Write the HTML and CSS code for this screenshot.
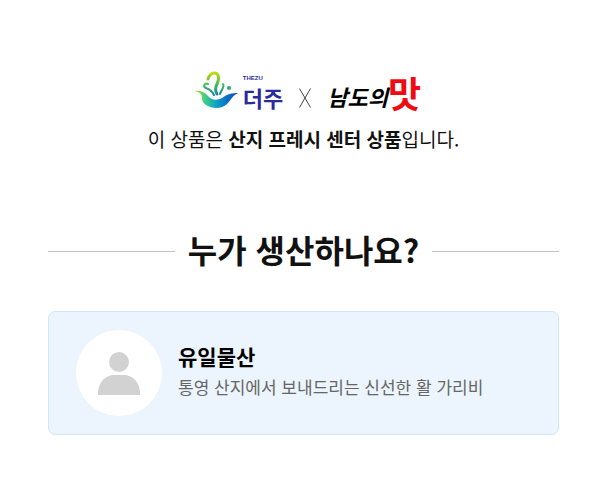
FILE: index.html
```html
<!DOCTYPE html>
<html lang="ko">
<head>
    <meta charset="UTF-8">
    <meta name="viewport" content="width=device-width, initial-scale=1.0">
    <title>산지 프레시 센터</title>
    <link rel="stylesheet" href="styles.css">
</head>
<body>
    <main class="container">
        <!-- Partner logos -->
        <header class="brands">
            <div class="thezu">
                <svg class="thezu-mark" viewBox="0 0 44 40" aria-hidden="true">
                    <defs>
                        <linearGradient id="wave" x1="0" y1="0" x2="1" y2="0">
                            <stop offset="0" stop-color="#b4e020"/>
                            <stop offset="0.25" stop-color="#38cc8a"/>
                            <stop offset="0.5" stop-color="#10a0c8"/>
                            <stop offset="0.75" stop-color="#0870c0"/>
                            <stop offset="1" stop-color="#2347b5"/>
                        </linearGradient>
                        <linearGradient id="swirl" gradientUnits="userSpaceOnUse" x1="0" y1="1" x2="0" y2="27">
                            <stop offset="0" stop-color="#c8dc10"/>
                            <stop offset="0.5" stop-color="#3db956"/>
                            <stop offset="1" stop-color="#0b75c0"/>
                        </linearGradient>
                    </defs>
                    <path d="M0 20C5 19 9 21 12 24C16 29 21 30 27 27C32 23 37 22 43 22C38 24 36 29 32 33C27 38 17 38 11 34C7 31 7 29 7 26C7 23 4 21 0 20Z" fill="url(#wave)"/>
                    <g fill="none" stroke="url(#swirl)" stroke-linecap="round" stroke-linejoin="round">
                        <path d="M13 8C14 4 17 2 19 2C25 2 24 9 22 13C20 17 20 20 22 23" stroke-width="3"/>
                        <path d="M13 13C9 11 8 16 11 17C14 18 17 20 19 24" stroke-width="2"/>
                        <path d="M28 13C30 16 26 19 25 23" stroke-width="2"/>
                    </g>
                    <circle cx="34" cy="17" r="2" fill="#29a978"/>
                </svg>
                <div class="thezu-name">
                    <span class="thezu-en">THEZU</span>
                    <span class="thezu-ko">더주</span>
                </div>
            </div>
            <svg class="cross" viewBox="0 0 12 20" aria-hidden="true">
                <path d="M0.5 0.5L11.5 19.5M11.5 0.5L0.5 19.5" stroke="#444" stroke-width="1"/>
            </svg>
            <div class="namdo">
                <span class="namdo-text">남도의</span><span class="namdo-taste">맛</span>
            </div>
        </header>
        <p class="notice">이 상품은 <b>산지 프레시 센터 상품</b>입니다.</p>

        <h1 class="heading">누가 생산하나요?</h1>

        <!-- Producer -->
        <section class="card">
            <div class="avatar">
                <svg class="avatar-icon" viewBox="0 0 42 43" aria-hidden="true">
                    <circle cx="21" cy="10" r="10"/>
                    <path d="M0 43V41C0 31 7 23 16 23H26C35 23 42 31 42 41V43Z"/>
                </svg>
            </div>
            <div class="producer">
                <h2 class="producer-name">유일물산</h2>
                <p class="producer-desc">통영 산지에서 보내드리는 신선한 활 가리비</p>
            </div>
        </section>
    </main>
</body>
</html>
```

FILE: styles.css
```css
body {
    margin: 0;
    background-color: #fff;
    color: #111;
    font-family: "Noto Sans CJK KR", sans-serif;
}
.container {
    padding: 68px 51px 48px 48px;
}

/* Logos */
.brands {
    display: flex;
    justify-content: center;
    align-items: center;
    gap: 16px;
    height: 48px;
    padding-left: 9px;
}
.thezu {
    display: flex;
    align-items: center;
    gap: 4px;
}
.thezu-mark {
    width: 44px;
    height: 40px;
    padding-bottom: 2px;
}
.thezu-name {
    display: flex;
    flex-direction: column;
    color: #2b2c9b;
    font-weight: bold;
    padding-top: 4px;
}
.thezu-en {
    font-family: "Liberation Sans", sans-serif;
    font-size: 6px;
    line-height: 6px;
}
.thezu-ko {
    font-size: 22px;
    line-height: 32px;
}
.cross {
    width: 12px;
    height: 20px;
    padding-top: 12px;
}
.namdo {
    display: flex;
    align-items: center;
}
.namdo-text {
    color: #000;
    font-size: 22px;
    line-height: 28px;
    font-weight: bold;
    font-style: italic;
    padding-top: 8px;
}
.namdo-taste {
    color: #f00b12;
    font-size: 36px;
    line-height: 48px;
    font-weight: bold;
}

.notice {
    margin: 7px 0 0;
    font-size: 19px;
    line-height: 32px;
    text-align: center;
}

/* Title with a line on both sides */
.heading {
    display: flex;
    align-items: center;
    gap: 13px;
    margin: 70px 0 38px;
    font-size: 32px;
    line-height: 48px;
}
.heading::before,
.heading::after {
    content: "";
    flex: 1;
    height: 1px;
    margin-top: 4px;
    background-color: #c4c4c4;
}

.card {
    display: flex;
    align-items: center;
    gap: 16px;
    padding: 18px 27px;
    background-color: #ecf5fd;
    border: 1px solid #d2e6f6;
    border-radius: 7px;
}
.avatar {
    display: flex;
    flex-shrink: 0;
    justify-content: center;
    align-items: center;
    width: 86px;
    height: 86px;
    border-radius: 50%;
    background-color: #fff;
}
.avatar-icon {
    width: 42px;
    height: 43px;
    fill: #d2d2d2;
}
.producer {
    padding-bottom: 4px;
}
.producer-name {
    margin: 0;
    color: #000;
    font-size: 21px;
    line-height: 32px;
}
.producer-desc {
    margin: 0;
    color: #666;
    font-size: 17px;
    line-height: 30px;
}
```
